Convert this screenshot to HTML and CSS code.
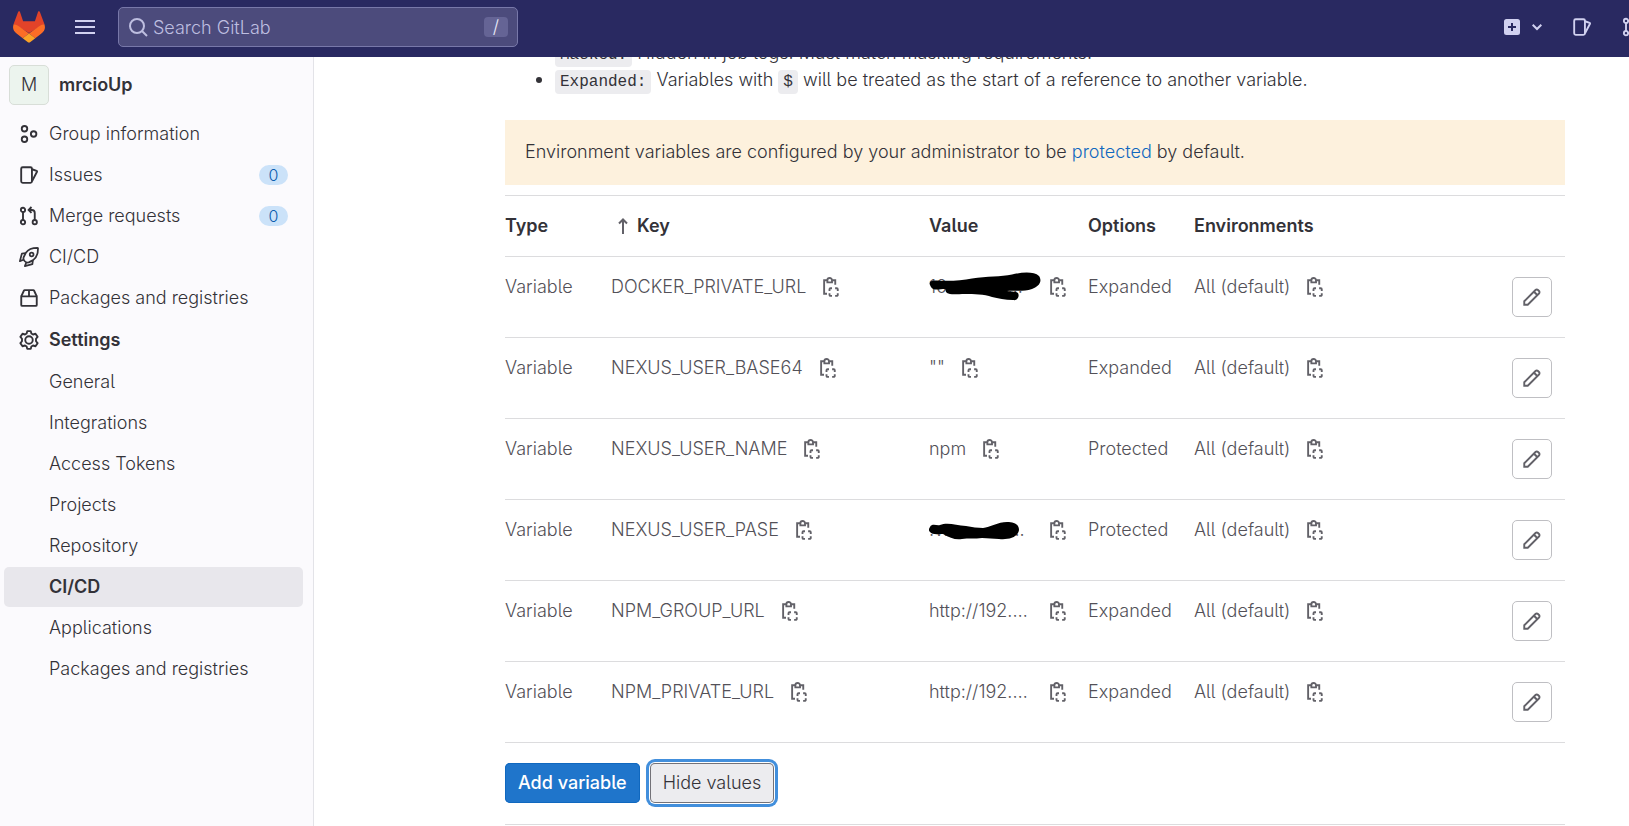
FILE: index.html
```html
<!DOCTYPE html>
<html lang="en">
<head>
<meta charset="utf-8">
<title>CI/CD Settings · mrcioUp · GitLab</title>
<link rel="stylesheet" href="styles.css">
</head>
<body>
<svg class="sprite" aria-hidden="true">
  <symbol id="copy" viewBox="0 0 16 16"><g fill="none" stroke="currentColor" stroke-width="1.5"><path d="M4.800 2.600H2.500v10.800h2.300M9 2.600h2.400v3.600"/><path d="M5.100 4.300V2.600a1.800 1.800 0 0 1 3.700 0v1.700z"/><path d="M6.800 11.100V9.800a.8.800 0 0 1 .8-.8h1.200M11.300 9h1.300a.8.800 0 0 1 .8.800v1.300M13.400 13v1.300a.8.800 0 0 1-.8.800h-1.300M8.800 15.100H7.600a.8.800 0 0 1-.8-.8V13"/></g></symbol>
  <symbol id="pencil" viewBox="0 0 16 16"><g fill="none" stroke="currentColor" stroke-width="1.5"><path d="M1.800 14.200v-2.800l9-9a1.400 1.400 0 0 1 2 0l.8.8a1.400 1.400 0 0 1 0 2l-9 9z"/><path d="M9.600 3.800l2.600 2.600"/></g></symbol>
  <symbol id="issues" viewBox="0 0 16 16"><g fill="none" stroke="currentColor" stroke-width="1.5" stroke-linejoin="round"><rect x="1.750" y="1.750" width="8.600" height="12.500" rx="1.200"/><path d="M10.400 3.400l3.700 1.300a.5.500 0 0 1 .3.700l-4 7.600"/></g></symbol>
  <symbol id="merge" viewBox="0 0 16 16"><g fill="none" stroke="currentColor" stroke-width="1.5"><circle cx="3.200" cy="3.100" r="1.700"/><circle cx="3.200" cy="12.900" r="1.700"/><circle cx="12.600" cy="12.900" r="1.700"/><path d="M3.200 4.800v6.400M12.600 11.200V5.600a2.400 2.400 0 0 0-2.400-2.400H8M10 .8L7.700 3.200 10 5.500"/></g></symbol>
  <symbol id="group" viewBox="0 0 16 16"><g fill="none" stroke="currentColor" stroke-width="1.5"><circle cx="4.400" cy="3.800" r="2.200"/><circle cx="4.400" cy="12.200" r="2.200"/><circle cx="11.700" cy="8" r="2.200"/></g></symbol>
  <symbol id="rocket" viewBox="0 0 16 16"><g fill="none" stroke="currentColor" stroke-width="1.4" stroke-linejoin="round"><path d="M15.2.8c-4.600-.1-7.700 1-9.700 3.800L3.700 8.200c-.5 1.400.2 2.500.9 3.200.7.700 1.900 1.200 3.200.9l3.500-1.800c2.800-2 4-5 3.900-9.700z"/><circle cx="10.100" cy="5.900" r="1.500"/><path d="M5.300 4.900l-3 .4-1.600 6 2.900-1.100M11.100 10.700l-.4 3-6 1.600 1.100-2.900"/></g></symbol>
  <symbol id="package" viewBox="0 0 16 16"><g fill="none" stroke="currentColor" stroke-width="1.500" stroke-linejoin="round"><path d="M1.800 6.700v6.800a.8.800 0 0 0 .8.800h10.800a.8.800 0 0 0 .8-.8V6.700z"/><path d="M1.800 6.700l2.100-4.500a.8.800 0 0 1 .7-.5h6.800a.8.800 0 0 1 .7.500l2.100 4.500M8 1.700v5"/></g></symbol>
  <symbol id="gear" viewBox="0 0 16 16"><g fill="none" stroke="currentColor" stroke-width="1.500" stroke-linejoin="round"><path d="M6.600.9h2.800l.5 1.900 1.300.8 2-.6 1.700 2.500-1.300 1.500v2l1.300 1.500-1.700 2.500-2-.6-1.300.8-.5 1.900H6.600l-.5-1.900-1.300-.8-2 .6-1.700-2.500L2.400 9V7L1.100 5.500 2.800 3l2 .6 1.300-.8z"/><circle cx="8" cy="8" r="3"/></g></symbol>
</svg>

<header class="navbar">
  <a class="logo" href="#" aria-label="GitLab"><svg viewBox="0 0 32 32" width="32" height="32"><path fill="#e24329" d="M31.400 12.900l-.1-.1L26.900 1.100a1 1 0 0 0-2 .1l-3 9.100H10.100l-3-9.100a1 1 0 0 0-2-.1L.7 12.800v.1L16 22z"/><path fill="#fc6d26" d="M31.300 12.900c-2 .5-4 1.300-5.500 2.500L16 22.600l6.300 4.600 5.800-4.400a8.500 8.500 0 0 0 3.200-9.900zM.7 12.900c2 .5 4 1.300 5.500 2.500L16 22.600l-6.300 4.600-5.800-4.400a8.500 8.500 0 0 1-3.200-9.900z"/><path fill="#fca326" d="M9.700 27.200l4.900 3.700a2.300 2.300 0 0 0 2.800 0l4.900-3.700-6.300-4.700z"/></svg></a>
  <button class="menu" aria-label="Toggle sidebar"><svg viewBox="0 0 20 16" width="20" height="16"><path d="M0 2h20M0 8h20M0 14h20" stroke="currentColor" stroke-width="2"/></svg></button>
  <label class="search">
    <svg viewBox="0 0 20 20" width="20" height="20"><g fill="none" stroke="currentColor" stroke-width="2"><circle cx="9" cy="9" r="7"/><path d="M14 14l5 5"/></g></svg>
    <input type="text" placeholder="Search GitLab" aria-label="Search GitLab">
    <kbd>/</kbd>
  </label>
  <div class="tools">
    <button class="new" aria-label="Create new"><svg viewBox="0 0 16 16" width="16" height="16"><path fill="currentColor" fill-rule="evenodd" d="M2.500 0h11A2.500 2.500 0 0 1 16 2.500v11a2.500 2.500 0 0 1-2.500 2.500h-11A2.500 2.500 0 0 1 0 13.500v-11A2.500 2.500 0 0 1 2.500 0zM7 4v3H4v2h3v3h2V9h3V7H9V4z"/></svg><svg viewBox="0 0 10 10" width="10" height="10"><path d="M.7 2.700L5 7l4.300-4.300" fill="none" stroke="currentColor" stroke-width="2"/></svg></button>
    <a href="#" aria-label="Issues"><svg class="icon"><use href="#issues"/></svg></a>
    <a href="#" aria-label="Merge requests"><svg class="icon"><use href="#merge"/></svg></a>
  </div>
</header>

<div class="page">
  <nav class="sidebar">
    <a class="context" href="#"><span class="avatar">M</span><span>mrcioUp</span></a>
    <ul>
      <li><a href="#"><svg class="icon"><use href="#group"/></svg>Group information</a></li>
      <li><a href="#"><svg class="icon"><use href="#issues"/></svg>Issues<span class="badge">0</span></a></li>
      <li><a href="#"><svg class="icon"><use href="#merge"/></svg>Merge requests<span class="badge">0</span></a></li>
      <li><a href="#"><svg class="icon"><use href="#rocket"/></svg>CI/CD</a></li>
      <li><a href="#"><svg class="icon"><use href="#package"/></svg>Packages and registries</a></li>
    </ul>
    <ul class="section">
      <li><a class="open" href="#"><svg class="icon"><use href="#gear"/></svg>Settings</a></li>
    </ul>
    <ul class="section sub">
      <li><a href="#">General</a></li>
      <li><a href="#">Integrations</a></li>
      <li><a href="#">Access Tokens</a></li>
      <li><a href="#">Projects</a></li>
      <li><a href="#">Repository</a></li>
      <li><a class="active" href="#">CI/CD</a></li>
      <li><a href="#">Applications</a></li>
      <li><a href="#">Packages and registries</a></li>
    </ul>
  </nav>

  <main>
    <ul class="notes">
      <li><code>Masked:</code> Hidden in job logs. Must match masking requirements.</li>
      <li><code>Expanded:</code> Variables with <code>$</code> will be treated as the start of a reference to another variable.</li>
    </ul>
    <p class="alert">Environment variables are configured by your administrator to be <a href="#">protected</a> by default.</p>
    <table>
      <colgroup><col class="c-type"><col class="c-key"><col class="c-value"><col class="c-options"><col class="c-env"><col></colgroup>
      <thead>
        <tr><th>Type</th><th><svg class="sort" viewBox="0 0 10 16" width="10" height="16"><path d="M5 16V1.500M1 5.500l4-4 4 4" fill="none" stroke="currentColor" stroke-width="2"/></svg>Key</th><th>Value</th><th>Options</th><th>Environments</th><th></th></tr>
      </thead>
      <tbody>
        <tr>
          <td>Variable</td>
          <td><div class="cell"><span>DOCKER_PRIVATE_URL</span><button class="copy" aria-label="Copy key"><svg class="icon"><use href="#copy"/></svg></button></div></td>
          <td><div class="cell full"><span>10...............</span><button class="copy" aria-label="Copy value"><svg class="icon"><use href="#copy"/></svg></button>
            <svg class="scribble" viewBox="0 0 112 30" width="112" height="30"><path d="M1 10Q2 8 8 8.500C18 9 32 9 43 6.500 58 4 72 5 83 2.500 94 0 105-.5 110 4c4 6-1 11-7 13-9 3-18 1-25 2 5 1 9 0 11 2 2 4-1 8-5 7-8 0-15-2-21-3-8-3-18-3-27-3-8 0-15 1-18-1-2-2-1-3-2-4-5 0-12 2-14-2-1-2-2-3-1-5z"/></svg></div></td>
          <td>Expanded</td>
          <td><div class="cell"><span>All (default)</span><button class="copy" aria-label="Copy environment"><svg class="icon"><use href="#copy"/></svg></button></div></td>
          <td><button class="edit" aria-label="Edit"><svg class="icon"><use href="#pencil"/></svg></button></td>
        </tr>
        <tr>
          <td>Variable</td>
          <td><div class="cell"><span>NEXUS_USER_BASE64</span><button class="copy" aria-label="Copy key"><svg class="icon"><use href="#copy"/></svg></button></div></td>
          <td><div class="cell"><span>""</span><button class="copy" aria-label="Copy value"><svg class="icon"><use href="#copy"/></svg></button></div></td>
          <td>Expanded</td>
          <td><div class="cell"><span>All (default)</span><button class="copy" aria-label="Copy environment"><svg class="icon"><use href="#copy"/></svg></button></div></td>
          <td><button class="edit" aria-label="Edit"><svg class="icon"><use href="#pencil"/></svg></button></td>
        </tr>
        <tr>
          <td>Variable</td>
          <td><div class="cell"><span>NEXUS_USER_NAME</span><button class="copy" aria-label="Copy key"><svg class="icon"><use href="#copy"/></svg></button></div></td>
          <td><div class="cell"><span>npm</span><button class="copy" aria-label="Copy value"><svg class="icon"><use href="#copy"/></svg></button></div></td>
          <td>Protected</td>
          <td><div class="cell"><span>All (default)</span><button class="copy" aria-label="Copy environment"><svg class="icon"><use href="#copy"/></svg></button></div></td>
          <td><button class="edit" aria-label="Edit"><svg class="icon"><use href="#pencil"/></svg></button></td>
        </tr>
        <tr>
          <td>Variable</td>
          <td><div class="cell"><span>NEXUS_USER_PASE</span><button class="copy" aria-label="Copy key"><svg class="icon"><use href="#copy"/></svg></button></div></td>
          <td><div class="cell full"><span>.v................</span><button class="copy" aria-label="Copy value"><svg class="icon"><use href="#copy"/></svg></button>
            <svg class="scribble low" viewBox="0 0 90 18" width="90" height="18"><path d="M1 5c2-4 7-1 10-2C18 0 27 3 37 4c6 1 12 2 17 2C61 5 69 0 78 0c7 0 12 2 12 8-1 8-12 10-20 9-6 0-11-1-17-1-7 1-14 0-20 1-7 1-12-1-19-5-5 0-11 1-13-2-2-2-1-3 0-5z"/></svg></div></td>
          <td>Protected</td>
          <td><div class="cell"><span>All (default)</span><button class="copy" aria-label="Copy environment"><svg class="icon"><use href="#copy"/></svg></button></div></td>
          <td><button class="edit" aria-label="Edit"><svg class="icon"><use href="#pencil"/></svg></button></td>
        </tr>
        <tr>
          <td>Variable</td>
          <td><div class="cell"><span>NPM_GROUP_URL</span><button class="copy" aria-label="Copy key"><svg class="icon"><use href="#copy"/></svg></button></div></td>
          <td><div class="cell full"><span>http://192.…</span><button class="copy" aria-label="Copy value"><svg class="icon"><use href="#copy"/></svg></button></div></td>
          <td>Expanded</td>
          <td><div class="cell"><span>All (default)</span><button class="copy" aria-label="Copy environment"><svg class="icon"><use href="#copy"/></svg></button></div></td>
          <td><button class="edit" aria-label="Edit"><svg class="icon"><use href="#pencil"/></svg></button></td>
        </tr>
        <tr>
          <td>Variable</td>
          <td><div class="cell"><span>NPM_PRIVATE_URL</span><button class="copy" aria-label="Copy key"><svg class="icon"><use href="#copy"/></svg></button></div></td>
          <td><div class="cell full"><span>http://192.…</span><button class="copy" aria-label="Copy value"><svg class="icon"><use href="#copy"/></svg></button></div></td>
          <td>Expanded</td>
          <td><div class="cell"><span>All (default)</span><button class="copy" aria-label="Copy environment"><svg class="icon"><use href="#copy"/></svg></button></div></td>
          <td><button class="edit" aria-label="Edit"><svg class="icon"><use href="#pencil"/></svg></button></td>
        </tr>
      </tbody>
    </table>
    <div class="actions">
      <button class="btn primary">Add variable</button>
      <button class="btn focused">Hide values</button>
    </div>
  </main>
</div>
</body>
</html>
```

FILE: styles.css
```css
* { box-sizing: border-box; }
html, body { height: 100%; overflow: hidden; }
body {
  margin: 0;
  background: #fff;
  color: #333238;
  font: 300 18px/20px Inter, "Liberation Sans", sans-serif;
  font-feature-settings: "cv05";
}
ul { margin: 0; padding: 0; list-style: none; }
a { color: inherit; text-decoration: none; }
button { border: 0; padding: 0; background: none; color: inherit; font: inherit; font-feature-settings: inherit; }
svg { display: block; flex: none; }
.sprite { position: absolute; width: 0; height: 0; }
.icon { width: 20px; height: 20px; }

.navbar {
  position: fixed;
  top: 0; left: 0; right: 0;
  z-index: 2;
  display: flex;
  align-items: center;
  height: 57px;
  padding: 0 0 3px 13px;
  background: #292961;
  color: #d1d1f0;
  overflow: hidden;
}
.menu { margin: 0 23px 0 30px; }
.search {
  display: flex;
  align-items: center;
  gap: 5px;
  width: 400px;
  height: 40px;
  padding: 0 9px;
  border: 1px solid #7878a9;
  border-radius: 5px;
  background: #4c4b7c;
  color: #bebee0;
}
.search input {
  flex: 1;
  min-width: 0;
  padding: 2px 0 0;
  border: 0;
  outline: 0;
  background: none;
  color: inherit;
  font: inherit;
}
.search input::placeholder { color: inherit; opacity: 1; }
.search kbd {
  width: 24px;
  border-radius: 4px;
  background: #656495;
  color: #e8e8f8;
  font: inherit;
  text-align: center;
}
.tools { display: flex; align-items: center; gap: 30px; margin: 0 -13px 0 auto; }
.new { display: flex; align-items: center; gap: 12px; }

.page { display: flex; min-height: 100%; }
.sidebar {
  flex: none;
  width: 314px;
  padding: 65px 10px 0 4px;
  border-right: 1px solid #e3e3e8;
  background: #fbfafd;
}
.context { display: flex; align-items: center; gap: 10px; padding-left: 5px; margin-bottom: 9px; font-weight: 600; }
.avatar {
  width: 40px;
  height: 40px;
  border: 1px solid #d8ded8;
  border-radius: 5px;
  background: #ecf4ee;
  font-weight: 300;
  line-height: 38px;
  text-align: center;
}
.sidebar li { margin-bottom: 1px; }
.sidebar li a { display: flex; align-items: center; gap: 10px; height: 40px; padding: 0 15px; border-radius: 5px; }
.section { margin-top: 2px; }
.sidebar .sub a { padding-left: 45px; }
.sidebar .open { font-weight: 600; }
.sidebar .active { background: #e8e7ec; font-weight: 600; }
.badge {
  width: 29px;
  margin-left: auto;
  border-radius: 10px;
  background: #cbe2f9;
  color: #0b5cad;
  font-size: 16px;
  text-align: center;
}

main { flex: 1; min-width: 0; padding: 39px 64px 0 191px; }
.notes { padding-left: 50px; list-style: disc; line-height: 26px; }
.notes li::marker { font-size: 20px; }
code {
  padding: 3px 5px;
  border-radius: 4px;
  background: #ececef;
  font: 16px/20px "Liberation Mono", monospace;
}
.alert { margin: 27px 0 10px; padding: 22px 20px 23px; background: #fdf1dd; }
.alert a { color: #1068bf; }

table { width: 100%; border-collapse: collapse; border-top: 1px solid #dcdcde; table-layout: fixed; }
.c-type, .c-options { width: 10%; }
.c-key { width: 30%; }
.c-value { width: 15%; }
.c-env { width: 30%; }
th, td { padding: 20px 20px 20px 0; border-bottom: 1px solid #dcdcde; text-align: left; vertical-align: top; white-space: nowrap; }
th:last-child, td:last-child { padding-right: 0; }
td:nth-child(1), td:nth-child(4) { padding-right: 0; }
th { font-weight: 600; }
td { color: #535158; }
.sort { display: inline-block; margin: 0 9px 0 7px; color: #626168; vertical-align: -2px; }
.cell { display: flex; gap: 15px; position: relative; }
.full { justify-content: space-between; gap: 0; }
.copy { flex: none; color: #626168; }
.scribble { position: absolute; top: -5px; left: 0; }
.scribble.low { top: 2px; }
.edit {
  display: flex;
  align-items: center;
  justify-content: center;
  width: 40px;
  height: 40px;
  margin-left: auto;
  margin-right: 13px;
  border: 1px solid #bfbfc3;
  border-radius: 5px;
  color: #626168;
}
.actions { display: flex; gap: 10px; padding: 20px 0 21px; border-bottom: 1px solid #dcdcde; }
.btn { height: 40px; padding: 0 13px; border-radius: 5px; }
.primary { background: #1f75cb; color: #fff; font-weight: 500; box-shadow: inset 0 0 0 1px #1068bf; }
.focused { background: #ececef; box-shadow: inset 0 0 0 1px #737278, 0 0 0 1px #fff, 0 0 0 4px #428fdc; }
```
